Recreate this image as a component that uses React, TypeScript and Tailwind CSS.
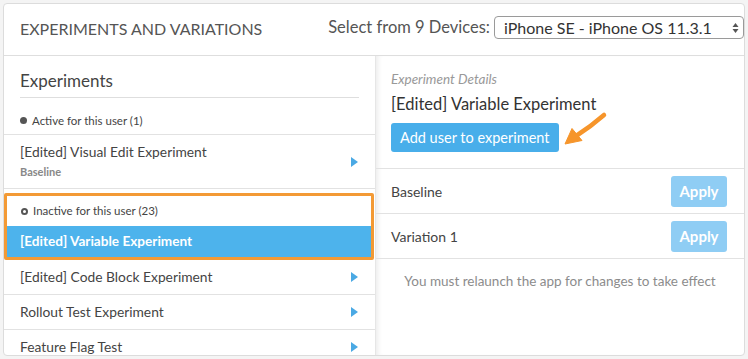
import React from "react";

const Caret = () => (
  <svg width="7" height="10" viewBox="0 0 7 10" className="shrink-0">
    <path d="M0 0 L7 5 L0 10 Z" fill="#4aa9e4" />
  </svg>
);

const ListRow: React.FC<{ title: string }> = ({ title }) => (
  <div className="flex items-center justify-between border-b border-[#e2e2e2] pl-4 pr-[17px] h-[35px] shrink-0">
    <div className="text-[13.8px] text-[#444]">{title}</div>
    <Caret />
  </div>
);

const VariationRow: React.FC<{ name: string }> = ({ name }) => (
  <div className="flex items-center justify-between border-b border-[#e2e2e2] pl-[15px] pr-[17px] h-[45px]">
    <span className="text-[14px] text-[#444]">{name}</span>
    <button className="bg-[#8fcdf4] text-white font-bold text-[15px] rounded-[3px] w-[56px] h-[31px]">Apply</button>
  </div>
);

export default function App() {
  return (
    <div className="w-[748px] h-[359px] bg-[#f4f4f4] p-[3px] font-['Lato',sans-serif] overflow-hidden">
      <div className="relative bg-white border border-[#dcdcdc] rounded-[4px] h-[353px] w-[742px] overflow-hidden flex flex-col">
        {/* header */}
        <div className="flex items-center justify-between h-[52px] shrink-0 border-b border-[#dedede] pl-4">
          <h1 className="text-[16px] text-[#555] mt-[-2px]">EXPERIMENTS AND VARIATIONS</h1>
          <div className="flex items-center gap-[4px] mt-[-4px]">
            <span className="text-[16.5px] text-[#555]">Select from 9 Devices:</span>
            <div className="flex items-center justify-between border border-[#9a9a9a] rounded-[4px] h-[23px] w-[250px] pl-[9px] pr-[4px] bg-white">
              <span className="text-[16px] text-[#333]">iPhone SE - iPhone OS 11.3.1</span>
              <svg width="7" height="12" viewBox="0 0 7 12">
                <path d="M0.5 5 L3.5 1 L6.5 5 Z M0.5 7 L3.5 11 L6.5 7 Z" fill="#555" />
              </svg>
            </div>
          </div>
        </div>

        <div className="flex flex-1 min-h-0">
          {/* left */}
          <div className="w-[371px] shrink-0 flex flex-col">
            <div className="mx-4 border-b border-[#dedede] h-[42px] shrink-0 flex items-end pb-[4px]">
              <h2 className="text-[17px] text-[#444]">Experiments</h2>
            </div>
            <div className="flex items-center gap-[5px] pl-4 h-[37px] shrink-0 border-b border-[#e2e2e2] pt-[9px]">
              <span className="w-[7px] h-[7px] rounded-full bg-[#555]" />
              <span className="text-[11.5px] text-[#444]">Active for this user (1)</span>
            </div>
            <div className="flex items-center justify-between border-b border-[#e2e2e2] pl-4 pr-[17px] h-[54px] shrink-0">
              <div className="flex flex-col pt-[1px]">
                <span className="text-[13.8px] text-[#444] leading-[18px]">[Edited] Visual Edit Experiment</span>
                <span className="text-[11px] font-bold text-[#888] leading-[18px] mt-[2px]">Baseline</span>
              </div>
              <Caret />
            </div>
            <div className="h-[4px] shrink-0" />
            <div className="border-[3px] border-[#f39a35] rounded-[2px] mr-[1px] shrink-0">
              <div className="flex items-center gap-[5px] pl-[14px] h-[30px]">
                <span className="w-[7px] h-[7px] rounded-full border-[2px] border-[#555]" />
                <span className="text-[11.5px] text-[#444]">Inactive for this user (23)</span>
              </div>
              <div className="flex items-center pl-[13px] h-[31px] bg-[#4db3ec]">
                <span className="text-[13.6px] font-bold text-white">[Edited] Variable Experiment</span>
              </div>
            </div>
            <ListRow title="[Edited] Code Block Experiment" />
            <ListRow title="Rollout Test Experiment" />
            <ListRow title="Feature Flag Test" />
          </div>

          {/* right */}
          <div className="flex-1 flex flex-col border-l border-[#e6e6e6] shadow-[inset_5px_0_5px_-3px_rgba(0,0,0,0.08)]">
            <div className="pl-[15px] pt-[14px] pb-[16px] border-b border-[#e2e2e2]">
              <div className="text-[13.5px] italic text-[#999] leading-[18px]">Experiment Details</div>
              <div className="text-[16.5px] text-[#333] leading-[20px] mt-[6px]">[Edited] Variable Experiment</div>
              <button className="mt-[9px] bg-[#48aeea] text-white text-[14.5px] rounded-[3px] h-[29px] px-[9px]">Add user to experiment</button>
            </div>
            <VariationRow name="Baseline" />
            <VariationRow name="Variation 1" />
            <div className="text-center text-[13.5px] text-[#8c8c8c] pt-[12px]">
              You must relaunch the app for changes to take effect
            </div>
          </div>
        </div>

        {/* annotation arrow */}
        <svg className="absolute left-[556px] top-[106px]" width="50" height="40" viewBox="0 0 50 40">
          <path d="M44 5 C36 12 27 19 16 26" stroke="#f6952b" strokeWidth="4.5" strokeLinecap="round" fill="none" />
          <path d="M5 34 L12 18.5 L22 30.5 Z" fill="#f6952b" stroke="#f6952b" strokeWidth="1" strokeLinejoin="round" />
        </svg>
      </div>
    </div>
  );
}
